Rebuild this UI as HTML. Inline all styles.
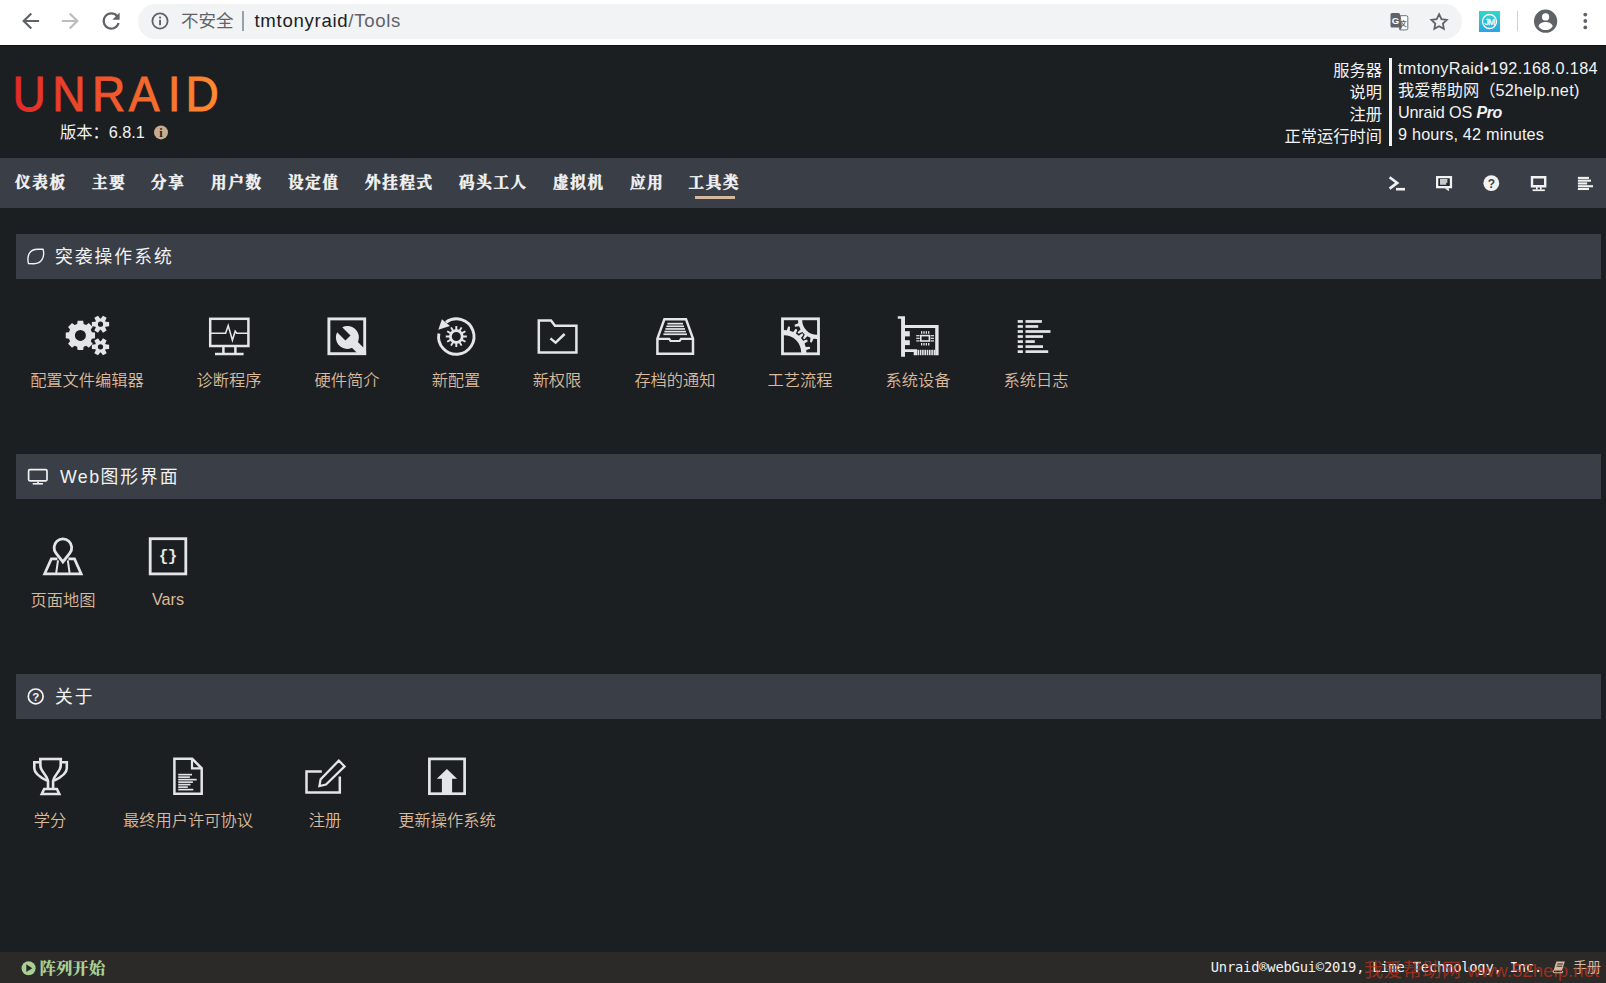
<!DOCTYPE html>
<html lang="zh-CN">
<head>
<meta charset="utf-8">
<title>tmtonyRaid/Tools</title>
<style>
*{box-sizing:border-box;margin:0;padding:0}
html,body{width:1606px;height:983px;overflow:hidden;background:#1c1f22}
body{position:relative;font-family:"Liberation Sans","Noto Sans CJK SC",sans-serif;color:#f2f2f2;font-size:16.25px}
.abs{position:absolute}
/* browser chrome */
#chrome{position:absolute;left:0;top:0;width:1606px;height:45px;background:#fff}
#pill{position:absolute;left:138px;top:4px;width:1324px;height:35px;border-radius:18px;background:#f1f3f4}
#chrome svg{position:absolute}
#insecure{position:absolute;left:181px;top:9px;font-size:17.5px;line-height:24px;color:#5f6368;white-space:nowrap}
#urlsep{position:absolute;left:242px;top:11px;width:1.5px;height:20px;background:#9aa0a6}
#url{position:absolute;left:254.5px;top:8px;font-size:18.6px;line-height:26px;letter-spacing:.7px;color:#202124;white-space:nowrap}
#url span{color:#5f6368}
/* header */
#header{position:absolute;left:0;top:45px;width:1606px;height:113px;background:#1c1f22;border-top:1px solid #0f1114}
#ver{position:absolute;left:60px;top:121px;line-height:22px;font-size:16.25px;color:#f2f2f2;white-space:nowrap}
.info td{line-height:21.7px;font-size:16.25px;white-space:nowrap;padding:0}
#lab{position:absolute;right:224px;top:58.6px;text-align:right;line-height:22.1px;white-space:nowrap}
#bar{position:absolute;left:1389px;top:58px;width:3px;height:88px;background:#f2f2f2}
#val{position:absolute;left:1398px;top:58px;line-height:21.9px;white-space:nowrap}
/* nav */
#nav{position:absolute;left:0;top:158px;width:1606px;height:50px;background:#3a3e46}
#nav a{position:absolute;top:0;height:50px;line-height:50.5px;font-family:"Liberation Serif","Noto Serif CJK SC",serif;font-weight:700;-webkit-text-stroke:.55px #f2f2f2;font-size:15.5px;letter-spacing:1.7px;color:#f2f2f2;white-space:nowrap;text-decoration:none}
#nav a.on:after{content:"";position:absolute;left:6.5px;width:40px;top:38px;height:3px;background:#d6b89c}
#nav svg{position:absolute}
/* sections */
.title{position:absolute;left:16px;width:1585px;height:45px;background:#3a3e46;color:#f2f2f2;font-size:17.8px;letter-spacing:2px;line-height:44px;white-space:nowrap}
.title span{position:absolute;top:.6px}
.title svg{position:absolute}
.tile{position:absolute;text-align:center;font-weight:350;color:#d9ba9d;font-size:16.25px;line-height:22px;white-space:nowrap;transform:translateX(-50%)}
.ico{position:absolute;overflow:visible}
/* footer */
#footer{position:absolute;left:0;top:952px;width:1606px;height:31px;background:#2b2a29}
#arr{position:absolute;left:39.5px;top:6px;font-family:"Liberation Serif","Noto Serif CJK SC",serif;font-weight:900;font-size:16.4px;line-height:22px;color:#a9cf93;white-space:nowrap}
#copy{position:absolute;right:64px;top:6px;font-family:"DejaVu Sans Mono","Liberation Mono",monospace;font-size:13.75px;letter-spacing:-.2px;line-height:19px;color:#f2f2f2;white-space:nowrap}
#man{position:absolute;left:1573px;top:4px;font-size:14px;line-height:22px;color:#d9bc9f;white-space:nowrap}
#wm{position:absolute;left:1364px;top:959px;font-size:19px;line-height:24px;color:rgba(196,48,24,.72);white-space:nowrap;letter-spacing:.5px}
</style>
</head>
<body>
<!-- ============ browser chrome ============ -->
<div id="chrome">
  <div id="pill"></div>
  <div id="insecure">不安全</div><div id="urlsep"></div>
  <div id="url">tmtonyraid<span>/Tools</span></div>
</div>
<!-- ============ header ============ -->
<div id="header"></div>
<div id="ver">版本：6.8.1</div>
<div id="lab">服务器<br>说明<br>注册<br>正常运行时间</div>
<div id="bar"></div>
<div id="val"><span style="letter-spacing:.34px">tmtonyRaid•192.168.0.184</span><br>我爱帮助网（<span style="letter-spacing:.25px">52help.net)</span><br><span style="letter-spacing:-.2px">Unraid OS <b><i style="font-size:16px;letter-spacing:-.35px">Pro</i></b></span><br><span style="letter-spacing:.18px">9 hours, 42 minutes</span></div>
<!-- ============ nav ============ -->
<div id="nav">
  <a style="left:15px">仪表板</a>
  <a style="left:92px">主要</a>
  <a style="left:151px">分享</a>
  <a style="left:211px">用户数</a>
  <a style="left:288px">设定值</a>
  <a style="left:365px">外挂程式</a>
  <a style="left:459px">码头工人</a>
  <a style="left:553px">虚拟机</a>
  <a style="left:630px">应用</a>
  <a class="on" style="left:688.5px">工具类</a>
</div>
<!-- ============ sections ============ -->
<div class="title" style="top:234px"><span style="left:39px">突袭操作系统</span></div>
<div class="title" style="top:454px"><span style="left:44px"><i style="font-style:normal;letter-spacing:1.4px">Web</i>图形界面</span></div>
<div class="title" style="top:674px"><span style="left:39px">关于</span></div>

<div class="tile" style="left:87px;top:369px">配置文件编辑器</div>
<div class="tile" style="left:229px;top:369px">诊断程序</div>
<div class="tile" style="left:347px;top:369px">硬件简介</div>
<div class="tile" style="left:456px;top:369px">新配置</div>
<div class="tile" style="left:557px;top:369px">新权限</div>
<div class="tile" style="left:675px;top:369px">存档的通知</div>
<div class="tile" style="left:800px;top:369px">工艺流程</div>
<div class="tile" style="left:918px;top:369px">系统设备</div>
<div class="tile" style="left:1036px;top:369px">系统日志</div>

<div class="tile" style="left:63px;top:589px">页面地图</div>
<div class="tile" style="left:168px;top:588px">Vars</div>

<div class="tile" style="left:50px;top:809px">学分</div>
<div class="tile" style="left:188px;top:809px">最终用户许可协议</div>
<div class="tile" style="left:325px;top:809px">注册</div>
<div class="tile" style="left:447px;top:809px">更新操作系统</div>
<!-- ============ footer ============ -->
<div id="footer">
  <div id="arr">阵列开始</div>
  <div id="copy">Unraid®webGui©2019, Lime Technology, Inc.</div>
  <div id="man">手册</div>
</div>
<div id="wm">我爱帮助网 <span style="letter-spacing:0;font-size:18.7px">www.52help.net</span></div>
<!--ICONS-->
<svg id="icons" width="1606" height="983" viewBox="0 0 1606 983" style="position:absolute;left:0;top:0;pointer-events:none">
<g fill="none" stroke="#5f6368" stroke-width="2.2" stroke-linecap="square" stroke-linejoin="miter"><path d="M38 21H24.5M30.5 14.2L23.7 21l6.8 6.8"/></g>
<g fill="none" stroke="#babcbe" stroke-width="2.2" stroke-linecap="square"><path d="M63 21h13.5M70.5 14.2l6.8 6.8-6.8 6.8"/></g>
<g fill="none" stroke="#5f6368" stroke-width="2.2"><path d="M117.2 16.2A7.6 7.6 0 1 0 118.6 23"/></g><path d="M119.6 12.6v7.2h-7.2z" fill="#5f6368"/>
<circle cx="160" cy="21" r="7.6" fill="none" stroke="#5f6368" stroke-width="1.8"/><rect x="159.1" y="19.8" width="1.9" height="5.4" fill="#5f6368"/><rect x="159.1" y="16.6" width="1.9" height="1.9" fill="#5f6368"/>
<path d="M1392 13h6.500a1.500 1.500 0 0 1 1.500 1.500l1.600 12.900h-9.600a1.500 1.500 0 0 1 -1.500 -1.500v-11.400a1.500 1.500 0 0 1 1.500 -1.500z" fill="#5f6368"/><path d="M1400.200 15.700h6.200a1.400 1.400 0 0 1 1.400 1.400v11.400a1.400 1.400 0 0 1 -1.400 1.400h-6.600l1.800-2.600z" fill="#fff" stroke="#5f6368" stroke-width=".9"/><path d="M1398.600 27.300h3.200l-2 2.800z" fill="#5f6368"/>
<text x="1391.700" y="23.800" font-family="Liberation Sans,sans-serif" font-weight="700" font-size="9.500" fill="#fff">G</text>
<text x="1400" y="26.200" font-family="Liberation Sans,Noto Sans CJK SC,sans-serif" font-weight="700" font-size="6.800" fill="#5f6368">文</text>
<path d="M1439.10 14.20L1441.45 19.06L1446.80 19.80L1442.90 23.54L1443.86 28.85L1439.10 26.30L1434.34 28.85L1435.30 23.54L1431.40 19.80L1436.75 19.06Z" fill="none" stroke="#5f6368" stroke-width="1.800" stroke-linejoin="miter"/>
<defs><linearGradient id="jm" x1="0" y1="0" x2="0" y2="1"><stop offset="0" stop-color="#2fd9c8"/><stop offset="1" stop-color="#2aa4e6"/></linearGradient><linearGradient id="lg" x1="0" y1="0" x2="1" y2="0"><stop offset="0" stop-color="#e22828"/><stop offset="1" stop-color="#ff8c2f"/></linearGradient></defs>
<rect x="1479" y="11" width="21" height="21" fill="url(#jm)"/><circle cx="1489.5" cy="21.5" r="7" fill="none" stroke="#fff" stroke-width="1.3"/>
<text x="1489.500" y="24.600" text-anchor="middle" font-family="Liberation Sans,sans-serif" font-size="8.600" fill="#fff" stroke="#fff" stroke-width=".3" letter-spacing="-0.700">JM</text>
<rect x="1517" y="11" width="1" height="20" fill="#ced0d3"/>
<circle cx="1545.600" cy="21.200" r="11.600" fill="#5f6368"/><circle cx="1545.600" cy="16.900" r="3.600" fill="#fff"/><path d="M1538.600 26.400c0-2.800 4.400-4.300 7-4.300s7 1.500 7 4.300c-1.600 2.300-4.200 3.700-7 3.700s-5.400-1.400-7-3.700z" fill="#fff"/>
<circle cx="1585.3" cy="14.6" r="1.9" fill="#5f6368"/>
<circle cx="1585.3" cy="21" r="1.9" fill="#5f6368"/>
<circle cx="1585.3" cy="27.4" r="1.9" fill="#5f6368"/>
<text text-rendering="geometricPrecision" transform="scale(0.93 1)" y="110.600" font-family="Liberation Sans,sans-serif" font-size="49.600" fill="url(#lg)" stroke="url(#lg)" stroke-width="0.900" x="13.510 56.170 98.970 138.520 180.400 199.510">UNRAID</text>
<circle cx="161" cy="132.4" r="7" fill="#c9ab8d"/><text x="161" y="136.6" text-anchor="middle" font-family="Liberation Serif,serif" font-weight="700" font-size="12" fill="#1c1f22">i</text>
<path d="M1389.6 177.2l7.6 5.7-7.6 5.7" fill="none" stroke="#f2f2f2" stroke-width="2.6"/><rect x="1396" y="187.9" width="9" height="2.6" fill="#f2f2f2"/>
<rect x="1437.150" y="177.150" width="13.800" height="10" fill="#24272c" stroke="#f2f2f2" stroke-width="2.300"/><path d="M1444.600 188.200l4.300 3.100v-3.100z" fill="#f2f2f2"/><path d="M1440 179.100h7.400v3.700h-1.200v1.900h-6.200z" fill="#c3cace"/>
<circle cx="1491.3" cy="183.2" r="7.9" fill="#f2f2f2"/><text x="1491.3" y="187.6" text-anchor="middle" font-family="Liberation Sans,sans-serif" font-weight="700" font-size="12" fill="#3a3e46">?</text>
<path d="M1532 177.2h13.2v9h-13.2z" fill="none" stroke="#f2f2f2" stroke-width="2.4"/><rect x="1536" y="187" width="1.6" height="2.6" fill="#f2f2f2"/><rect x="1540" y="187" width="1.6" height="2.6" fill="#f2f2f2"/><rect x="1532.6" y="189.4" width="12.2" height="1.7" fill="#f2f2f2"/>
<rect x="1577.9" y="176.85" width="11.1" height="2.1" fill="#f2f2f2"/>
<rect x="1577.9" y="179.62" width="13.1" height="2.1" fill="#f2f2f2"/>
<rect x="1577.9" y="182.39" width="9.3" height="2.1" fill="#f2f2f2"/>
<rect x="1577.9" y="185.16" width="15.1" height="2.1" fill="#f2f2f2"/>
<rect x="1577.9" y="187.93" width="11.1" height="2.1" fill="#f2f2f2"/>
<path d="M28.500 263.600C26.400 255.500 29.800 249.300 37.600 249.300L43.100 249.300C45 257 41.800 263.700 33.800 263.700Z" fill="none" stroke="#f2f2f2" stroke-width="1.400" stroke-linejoin="round"/>
<rect x="28.6" y="469.6" width="18.4" height="11.2" rx="1.3" fill="none" stroke="#f2f2f2" stroke-width="1.7"/><rect x="37.2" y="481.5" width="1.6" height="2" fill="#f2f2f2"/><rect x="32.7" y="483" width="10.2" height="1.6" fill="#f2f2f2"/>
<circle cx="35.7" cy="696.4" r="7.4" fill="none" stroke="#f2f2f2" stroke-width="1.7"/><text x="35.7" y="700.6" text-anchor="middle" font-family="Liberation Sans,sans-serif" font-weight="700" font-size="11.5" fill="#f2f2f2">?</text>
<path fill-rule="evenodd" fill="#e3e5e8" d="M91.85 332.17 L95.04 332.61 L95.04 338.19 L91.85 338.63 L90.78 341.21 L92.72 343.78 L88.78 347.72 L86.21 345.78 L83.63 346.85 L83.19 350.04 L77.61 350.04 L77.17 346.85 L74.59 345.78 L72.02 347.72 L68.08 343.78 L70.02 341.21 L68.95 338.63 L65.76 338.19 L65.76 332.61 L68.95 332.17 L70.02 329.59 L68.08 327.02 L72.02 323.08 L74.59 325.02 L77.17 323.95 L77.61 320.76 L83.19 320.76 L83.63 323.95 L86.21 325.02 L88.78 323.08 L92.72 327.02 L90.78 329.59Z M74.90 335.40 a5.50 5.50 0 1 0 11.00 0 a5.50 5.50 0 1 0 -11.00 0Z"/>
<path fill-rule="evenodd" fill="#e3e5e8" d="M105.54 321.76 L109.14 322.08 L109.14 326.32 L105.54 326.64 L105.13 327.35 L106.66 330.62 L102.98 332.75 L100.91 329.78 L100.09 329.78 L98.02 332.75 L94.34 330.62 L95.87 327.35 L95.46 326.64 L91.86 326.32 L91.86 322.08 L95.46 321.76 L95.87 321.05 L94.34 317.78 L98.02 315.65 L100.09 318.62 L100.91 318.62 L102.98 315.65 L106.66 317.78 L105.13 321.05Z M97.90 324.20 a2.60 2.60 0 1 0 5.20 0 a2.60 2.60 0 1 0 -5.20 0Z"/>
<path fill-rule="evenodd" fill="#e3e5e8" d="M105.54 344.36 L109.14 344.68 L109.14 348.92 L105.54 349.24 L105.13 349.95 L106.66 353.22 L102.98 355.35 L100.91 352.38 L100.09 352.38 L98.02 355.35 L94.34 353.22 L95.87 349.95 L95.46 349.24 L91.86 348.92 L91.86 344.68 L95.46 344.36 L95.87 343.65 L94.34 340.38 L98.02 338.25 L100.09 341.22 L100.91 341.22 L102.98 338.25 L106.66 340.38 L105.13 343.65Z M97.90 346.80 a2.60 2.60 0 1 0 5.20 0 a2.60 2.60 0 1 0 -5.20 0Z"/>
<g fill="none" stroke="#e3e5e8" stroke-width="2.5"><rect x="210.2" y="318.8" width="38.2" height="27.2"/><path d="M210 333.2h15.600l2.600-7.600 4.200 14.600 2.800-9 1.600 2h11.600" stroke-width="1.6"/><path d="M223.400 347v7M235.400 347v7M215 354h28.600"/></g>
<rect x="328.900" y="318.900" width="35.800" height="34.800" fill="none" stroke="#e3e5e8" stroke-width="2.900"/>
<clipPath id="wc"><rect x="327.500" y="317.500" width="38.600" height="37.600"/></clipPath>
<g clip-path="url(#wc)"><g transform="translate(347.400 337.400) rotate(45)" fill="#e3e5e8"><path d="M-10.920 -3.600A11.500 11.500 0 1 1 -10.920 3.600L0.800 3.600L0.800 -3.600Z"/><rect x="9" y="-4.100" width="24" height="8.200"/></g></g>
<path d="M446 322.200A17.700 17.700 0 1 1 438.900 333.400" fill="none" stroke="#e3e5e8" stroke-width="2.900"/><path d="M438.300 329.800L441.900 319.300L450 325.900z" fill="#e3e5e8"/>
<path fill-rule="evenodd" fill="#e3e5e8" d="M463.43 335.52 L466.86 335.56 L466.86 337.44 L463.43 337.48 L462.97 339.22 L465.91 340.96 L464.97 342.60 L461.99 340.91 L460.71 342.19 L462.40 345.17 L460.76 346.11 L459.02 343.17 L457.28 343.63 L457.24 347.06 L455.36 347.06 L455.32 343.63 L453.58 343.17 L451.84 346.11 L450.20 345.17 L451.89 342.19 L450.61 340.91 L447.63 342.60 L446.69 340.96 L449.63 339.22 L449.17 337.48 L445.74 337.44 L445.74 335.56 L449.17 335.52 L449.63 333.78 L446.69 332.04 L447.63 330.40 L450.61 332.09 L451.89 330.81 L450.20 327.83 L451.84 326.89 L453.58 329.83 L455.32 329.37 L455.36 325.94 L457.24 325.94 L457.28 329.37 L459.02 329.83 L460.76 326.89 L462.40 327.83 L460.71 330.81 L461.99 332.09 L464.97 330.40 L465.91 332.04 L462.97 333.78Z M451.80 336.50 a4.50 4.50 0 1 0 9.00 0 a4.50 4.50 0 1 0 -9.00 0Z"/>
<path d="M538.800 320.600h12.200l4 5.200h21.400v26.800h-37.600z" fill="none" stroke="#e3e5e8" stroke-width="2.5"/><path d="M550.400 338.400l5.200 4.200 9-8.600" fill="none" stroke="#e3e5e8" stroke-width="2.5"/>
<g fill="none" stroke="#e3e5e8" stroke-width="2.5"><path d="M657.400 338.600l7-19.400h21.600l7 19.400v15.200h-35.600z"/><path d="M657.400 338.800h11.800l1.400 2.200h9l1.400-2.200h11.800" stroke-width="2.2"/></g>
<rect x="667.4" y="322.80" width="15.6" height="1.700" fill="#e3e5e8"/>
<rect x="666.4" y="325.45" width="17.6" height="1.700" fill="#e3e5e8"/>
<rect x="665.4" y="328.10" width="19.6" height="1.700" fill="#e3e5e8"/>
<rect x="664.4" y="330.75" width="21.6" height="1.700" fill="#e3e5e8"/>
<rect x="663.4" y="333.40" width="23.6" height="1.700" fill="#e3e5e8"/>
<rect x="782.500" y="318.800" width="36" height="35" fill="none" stroke="#e3e5e8" stroke-width="2.800"/>
<clipPath id="pc"><rect x="783" y="319" width="35.400" height="34.600"/></clipPath>
<g clip-path="url(#pc)"><path fill-rule="evenodd" fill="#e3e5e8" d="M798.84 335.72 L802.13 333.31 L803.46 334.66 L801.00 337.91 L803.12 340.84 L806.98 339.50 L807.85 341.19 L804.54 343.57 L805.71 346.99 L809.79 346.85 L810.13 348.72 L806.26 350.02 L806.37 353.64 L810.31 354.71 L810.08 356.59 L806.00 356.70 L805.04 360.18 L808.49 362.36 L807.72 364.09 L803.79 362.99 L801.84 366.04 L804.49 369.14 L803.25 370.57 L799.82 368.36 L797.06 370.70 L798.68 374.44 L797.06 375.44 L794.44 372.32 L791.11 373.74 L791.56 377.80 L789.72 378.27 L788.13 374.52 L784.54 374.89 L783.77 378.90 L781.87 378.81 L781.46 374.76 L777.91 374.06 L775.99 377.66 L774.21 377.02 L775.01 373.02 L771.83 371.31 L768.93 374.18 L767.42 373.04 L769.36 369.46 L766.83 366.88 L763.21 368.78 L762.10 367.24 L765.02 364.39 L763.35 361.18 L759.34 361.93 L758.73 360.13 L762.36 358.27 L761.71 354.71 L757.66 354.24 L757.60 352.34 L761.62 351.63 L762.05 348.04 L758.32 346.40 L758.82 344.57 L762.87 345.07 L764.34 341.77 L761.26 339.10 L762.28 337.50 L766.00 339.17 L768.37 336.45 L766.22 332.99 L767.66 331.76 L770.72 334.46 L773.80 332.56 L772.76 328.61 L774.50 327.87 L776.63 331.35 L780.13 330.44 L780.30 326.36 L782.18 326.16 L783.19 330.11 L786.81 330.28 L788.17 326.43 L790.03 326.80 L789.83 330.87 L793.23 332.09 L795.67 328.82 L797.33 329.72 L795.94 333.55Z M766.80 352.50 a17.20 17.20 0 1 0 34.40 0 a17.20 17.20 0 1 0 -34.40 0Z"/><path fill-rule="evenodd" fill="#e3e5e8" d="M802.27 332.00 L798.63 333.84 L797.53 332.25 L800.54 329.50 L799.06 326.24 L795.00 326.72 L794.52 324.85 L798.29 323.29 L798.00 319.73 L794.03 318.79 L794.21 316.87 L798.29 316.70 L799.24 313.25 L795.83 311.01 L796.66 309.27 L800.55 310.50 L802.62 307.58 L800.18 304.31 L801.56 302.96 L804.79 305.44 L807.74 303.41 L806.56 299.50 L808.32 298.70 L810.51 302.14 L813.97 301.24 L814.20 297.17 L816.12 297.02 L817.01 301.00 L820.57 301.34 L822.18 297.59 L824.04 298.10 L823.50 302.15 L826.73 303.68 L829.53 300.71 L831.10 301.83 L829.22 305.45 L831.73 308.00 L835.37 306.16 L836.47 307.75 L833.46 310.50 L834.94 313.76 L839.00 313.28 L839.48 315.15 L835.71 316.71 L836.00 320.27 L839.97 321.21 L839.79 323.13 L835.71 323.30 L834.76 326.75 L838.17 328.99 L837.34 330.73 L833.45 329.50 L831.38 332.42 L833.82 335.69 L832.44 337.04 L829.21 334.56 L826.26 336.59 L827.44 340.50 L825.68 341.30 L823.49 337.86 L820.03 338.76 L819.80 342.83 L817.88 342.98 L816.99 339.00 L813.43 338.66 L811.82 342.41 L809.96 341.90 L810.50 337.85 L807.27 336.32 L804.47 339.29 L802.90 338.17 L804.78 334.55Z M802.20 320.00 a14.80 14.80 0 1 0 29.60 0 a14.80 14.80 0 1 0 -29.60 0Z"/></g>
<path d="M897.800 316.200h7.200v40.600h-3.900v-38h-3.300z" fill="#e3e5e8"/>
<path d="M905 325.100h33.600v30.100h-3.400v-27.100h-30.200z" fill="#e3e5e8"/>
<path d="M905 349.200h12v6h-3.300v-3.200h-8.700z" fill="#e3e5e8"/>
<rect x="905" y="331.200" width="4.800" height="5.200" fill="#e3e5e8"/><rect x="905" y="340.200" width="4.800" height="4.900" fill="#e3e5e8"/>
<rect x="917.50" y="349.800" width="1.600" height="5.400" fill="#e3e5e8"/>
<rect x="919.80" y="349.800" width="1.600" height="5.400" fill="#e3e5e8"/>
<rect x="922.10" y="349.800" width="1.600" height="5.400" fill="#e3e5e8"/>
<rect x="924.40" y="349.800" width="1.600" height="5.400" fill="#e3e5e8"/>
<rect x="926.70" y="349.800" width="1.600" height="5.400" fill="#e3e5e8"/>
<rect x="929.00" y="349.800" width="1.600" height="5.400" fill="#e3e5e8"/>
<rect x="931.30" y="349.800" width="1.600" height="5.400" fill="#e3e5e8"/>
<rect x="933.60" y="349.800" width="1.600" height="5.400" fill="#e3e5e8"/>
<rect x="920.800" y="335.600" width="8.600" height="5.400" fill="none" stroke="#e3e5e8" stroke-width="1.600"/>
<rect x="921.00" y="331.200" width="1.300" height="2.500" fill="#e3e5e8"/><rect x="921.00" y="343" width="1.300" height="2.500" fill="#e3e5e8"/>
<rect x="923.35" y="331.200" width="1.300" height="2.500" fill="#e3e5e8"/><rect x="923.35" y="343" width="1.300" height="2.500" fill="#e3e5e8"/>
<rect x="925.70" y="331.200" width="1.300" height="2.500" fill="#e3e5e8"/><rect x="925.70" y="343" width="1.300" height="2.500" fill="#e3e5e8"/>
<rect x="928.05" y="331.200" width="1.300" height="2.500" fill="#e3e5e8"/><rect x="928.05" y="343" width="1.300" height="2.500" fill="#e3e5e8"/>
<rect x="916.200" y="335.10" width="3.400" height="1.200" fill="#e3e5e8"/><rect x="930.600" y="335.10" width="3.400" height="1.200" fill="#e3e5e8"/>
<rect x="916.200" y="337.70" width="3.400" height="1.200" fill="#e3e5e8"/><rect x="930.600" y="337.70" width="3.400" height="1.200" fill="#e3e5e8"/>
<rect x="916.200" y="340.30" width="3.400" height="1.200" fill="#e3e5e8"/><rect x="930.600" y="340.30" width="3.400" height="1.200" fill="#e3e5e8"/>
<rect x="1017.700" y="320.10" width="5.200" height="2.700" fill="#e3e5e8"/><rect x="1025.500" y="320.10" width="16.4" height="2.700" fill="#e3e5e8"/>
<rect x="1017.700" y="325.13" width="5.200" height="2.700" fill="#e3e5e8"/><rect x="1025.500" y="325.13" width="12.7" height="2.700" fill="#e3e5e8"/>
<rect x="1017.700" y="330.16" width="5.200" height="2.700" fill="#e3e5e8"/><rect x="1025.500" y="330.16" width="25.0" height="2.700" fill="#e3e5e8"/>
<rect x="1017.700" y="335.19" width="5.200" height="2.700" fill="#e3e5e8"/><rect x="1025.500" y="335.19" width="17.5" height="2.700" fill="#e3e5e8"/>
<rect x="1017.700" y="340.22" width="5.200" height="2.700" fill="#e3e5e8"/><rect x="1025.500" y="340.22" width="9.3" height="2.700" fill="#e3e5e8"/>
<rect x="1017.700" y="345.25" width="5.200" height="2.700" fill="#e3e5e8"/><rect x="1025.500" y="345.25" width="17.5" height="2.700" fill="#e3e5e8"/>
<rect x="1017.700" y="350.28" width="5.200" height="2.700" fill="#e3e5e8"/><rect x="1025.500" y="350.28" width="22.7" height="2.700" fill="#e3e5e8"/>
<g fill="none" stroke="#e3e5e8" stroke-width="2.800" stroke-linejoin="miter"><path d="M62.900 561.900L56 553.150A8.800 8.800 0 1 1 69.800 553.150Z"/><path d="M57.400 558.900H51.300L44.600 573.900H81.200L74.500 558.900H68.400" stroke-width="2.700"/><path d="M58 560.300L56.200 573M67.800 560.300L69.600 573" stroke-width="2"/></g>
<rect x="150.200" y="538.700" width="35.600" height="35.200" fill="none" stroke="#e3e5e8" stroke-width="2.800"/><text x="167.800" y="560.800" text-anchor="middle" font-family="Liberation Mono,monospace" font-weight="700" font-size="16" fill="#e3e5e8" letter-spacing="-0.5">{}</text>
<g fill="none" stroke="#e3e5e8" stroke-width="2.600" stroke-linejoin="miter"><path d="M39 759H62.100"/><path d="M40.400 759V766C40.600 771.500 46.600 774 48 781V789"/><path d="M60.700 759V766C60.500 771.500 54.500 774 53.100 781V789"/><path d="M39.500 762.300H34.300V768.500C34.500 773.500 40 777.300 47 780.600"/><path d="M61.600 762.300H66.800V768.500C66.600 773.500 61.100 777.300 54.100 780.600"/><path d="M44.200 789H56.900L59.300 794H41.800Z"/></g>
<path d="M174.400 758.800h17.800l9.500 9.500v25.500h-27.300z" fill="none" stroke="#e3e5e8" stroke-width="2.500"/><path d="M192 759v9.400h9.400" fill="none" stroke="#e3e5e8" stroke-width="2.200"/>
<rect x="178.200" y="773.80" width="13.8" height="1.650" fill="#e3e5e8"/>
<rect x="178.200" y="776.30" width="11.7" height="1.650" fill="#e3e5e8"/>
<rect x="178.200" y="778.80" width="18.5" height="1.650" fill="#e3e5e8"/>
<rect x="178.200" y="781.30" width="14.7" height="1.650" fill="#e3e5e8"/>
<rect x="178.200" y="783.80" width="12.3" height="1.650" fill="#e3e5e8"/>
<rect x="178.200" y="786.30" width="9.6" height="1.650" fill="#e3e5e8"/>
<rect x="178.200" y="788.80" width="15.1" height="1.650" fill="#e3e5e8"/>
<g fill="none" stroke="#e3e5e8" stroke-width="2.500"><path d="M321.800 771.500h-15.300v20.900h33.300v-16"/><path d="M338.800 760.600l5.800 5.800-18.600 18.200-6.600 1.400 1.200-6.600z" stroke-width="2.200" stroke-linejoin="miter"/></g>
<rect x="429.400" y="758.900" width="35.200" height="34.800" fill="none" stroke="#e3e5e8" stroke-width="2.700"/><path d="M446.900 769l10.200 9.700h-5v15h-10.200v-15h-5.100z" fill="#e3e5e8"/>
<circle cx="28.600" cy="968.200" r="7" fill="#a9cf93"/><path d="M26.300 964.300l6 3.900-6 3.900z" fill="#2b2a29"/>
<path d="M1556.400 961.400h8.400l-2.800 9h-8.400z" fill="#d9bc9f"/><path d="M1557.300 964h5.600M1556.600 966.200h5.600" stroke="#2b2a29" stroke-width="1" fill="none"/><path d="M1553.700 970.400c-1 1.400-.3 2.400 1 2.400h7.400l.7-1.800" fill="none" stroke="#d9bc9f" stroke-width="1.100"/>
</svg>
<!--/ICONS-->
</body>
</html>
